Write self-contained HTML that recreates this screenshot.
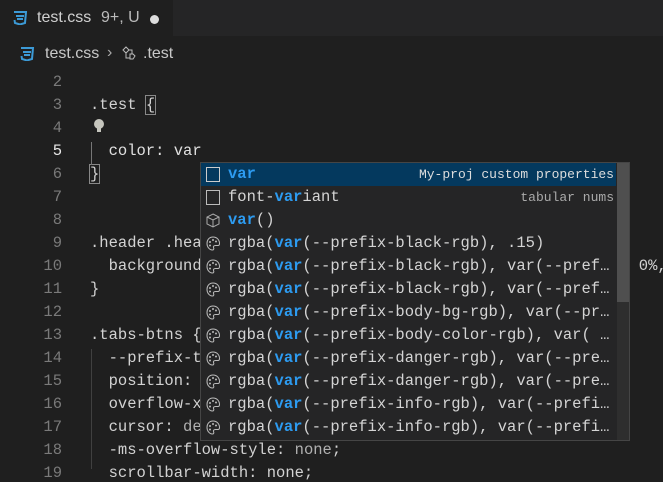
<!DOCTYPE html>
<html><head><meta charset="utf-8"><style>
*{margin:0;padding:0;box-sizing:border-box}
body{width:663px;height:466px;background:#1f1f1f;overflow:hidden;position:relative;font-family:"Liberation Sans",sans-serif;color:#ccc}
.tabbar{position:absolute;left:0;top:0;width:663px;height:36px;background:#252526}
.tab{position:absolute;left:0;top:0;width:173px;height:36px;background:#1f1f1f;font-size:16px;color:#d0d0d0}
.bc{position:absolute;left:0;top:36px;height:34px;width:663px;font-size:16px;color:#c8c8c8}
.mono{font-family:"Liberation Mono",monospace;font-size:15.5px}
.ln{position:absolute;left:0;width:62px;text-align:right;color:#7a7a7a}
.code{position:absolute;left:90px;color:#d2d2d2;white-space:pre}
.sw{position:absolute;left:200px;top:162px;width:430px;height:279px;background:#252526;border:1px solid #454545}
.row{position:absolute;left:0;width:415px;height:23px;white-space:pre;color:#d4d4d4}
.row .t{position:absolute;left:27px;top:2px}
.row .ic{position:absolute;left:5px;top:4px;width:14px;height:15px}
.h{color:#2d9bf0;font-weight:bold}
.d{position:absolute;right:2px;top:4px;color:#aaa;font-family:"Liberation Mono",monospace;font-size:13px}
</style></head><body>
<div class="tabbar"></div>
<div class="tab">
 <svg style="position:absolute;left:12px;top:11px" width="16" height="14" viewBox="0 0 16 14"><path d="M2 1h12l-1 11-5 1.5L3 12 2.5 9" fill="none" stroke="#3c9ad6" stroke-width="2"/><path d="M4 5h8M5 8h6" stroke="#3c9ad6" stroke-width="2"/></svg>
 <span style="position:absolute;left:37px;top:9px">test.css</span>
 <span style="position:absolute;left:101px;top:9px;color:#bbb">9+, U</span>
 <span style="position:absolute;left:150px;top:15px;width:9px;height:9px;border-radius:50%;background:#ddd"></span>
</div>
<div class="bc">
 <svg style="position:absolute;left:19px;top:11px" width="16" height="14" viewBox="0 0 16 14"><path d="M2 1h12l-1 11-5 1.5L3 12 2.5 9" fill="none" stroke="#3c9ad6" stroke-width="2"/><path d="M4 5h8M5 8h6" stroke="#3c9ad6" stroke-width="2"/></svg>
 <span style="position:absolute;left:45px;top:9px">test.css</span>
 <span style="position:absolute;left:107px;top:8px;color:#aaa">›</span>
 <svg style="position:absolute;left:122px;top:10px" width="15" height="15" viewBox="0 0 15 15"><path d="M1 4l3-3 3 3-3 3zM8 8h3l2 2-2 3H8zM4 7v5h4M7 4h3v4" fill="none" stroke="#bbb" stroke-width="1"/></svg>
 <span style="position:absolute;left:143px;top:9px">.test</span>
</div>
<div class="mono">
<div class="ln" style="top:73px">2</div>
<div class="ln" style="top:96px">3</div><div class="code" style="top:96px">.test <span style="outline:1px solid #888">{</span></div>
<div class="ln" style="top:119px">4</div>
<svg style="position:absolute;left:93px;top:118px" width="12" height="16" viewBox="0 0 12 16"><circle cx="6" cy="6" r="5" fill="#c5c5bd"/><rect x="4" y="10" width="4" height="4" fill="#c5c5bd"/></svg>
<div class="ln" style="top:142px;color:#e8e8e8">5</div><div class="code" style="top:142px;color:#e0e0e0">  color: var</div>
<div class="ln" style="top:165px">6</div><div class="code" style="top:165px"><span style="outline:1px solid #888">}</span></div>
<div style="position:absolute;left:91px;top:142px;width:1px;height:23px;background:#777"></div>
<div class="ln" style="top:188px">7</div>
<div class="ln" style="top:211px">8</div>
<div class="ln" style="top:234px">9</div><div class="code" style="top:234px">.header .header-</div>
<div class="ln" style="top:257px">10</div><div class="code" style="top:257px">  background-image: linear-gradient(0%,                    0%,</div>
<div class="ln" style="top:280px">11</div><div class="code" style="top:280px">}</div>
<div class="ln" style="top:303px">12</div>
<div class="ln" style="top:326px">13</div><div class="code" style="top:326px">.tabs-btns {</div>
<div class="ln" style="top:349px">14</div><div class="code" style="top:349px">  --prefix-tabs</div>
<div class="ln" style="top:372px">15</div><div class="code" style="top:372px">  position: rel</div>
<div class="ln" style="top:395px">16</div><div class="code" style="top:395px">  overflow-x: a</div>
<div class="ln" style="top:418px">17</div><div class="code" style="top:418px">  cursor: <span style="color:#b0b0b0">default</span></div>
<div class="ln" style="top:441px">18</div><div class="code" style="top:441px">  -ms-overflow-style: <span style="color:#b0b0b0">none</span>;</div>
<div class="ln" style="top:464px">19</div><div class="code" style="top:464px">  scrollbar-width: none;</div>
<div style="position:absolute;left:91px;top:349px;width:1px;height:120px;background:#404040"></div>

<div class="sw">
 <div class="row" style="top:0;background:#04395e;width:415px"><div class="ic" style="border:1px solid #ccc"></div><span class="t h">var</span><span class="d" style="color:#ddd">My-proj custom properties</span></div>
 <div class="row" style="top:23px"><div class="ic" style="border:1px solid #bbb"></div><span class="t">font-<span class="h">var</span>iant</span><span class="d">tabular nums</span></div>
 <div class="row" style="top:46px"><svg class="ic" viewBox="0 0 14 15"><path d="M7 1l6 3v7l-6 3-6-3V4zM1 4l6 3 6-3M7 7v7" fill="none" stroke="#aaa"/></svg><span class="t"><span class="h">var</span>()</span></div>
 <div class="row" style="top:69px"><svg class="ic" viewBox="0 0 14 15"><path d="M7 1C3 1 1 4 1 7.5S3.5 14 6.5 14c1.5 0 1.5-1.5 1-2.5s.5-2 2-2H12c1 0 1.5-1 1.5-2C13.5 4 11 1 7 1z" fill="none" stroke="#bbb"/><circle cx="4" cy="6" r="1" fill="#bbb"/><circle cx="7" cy="4" r="1" fill="#bbb"/><circle cx="10" cy="5.5" r="1" fill="#bbb"/><circle cx="4" cy="9.5" r="1" fill="#bbb"/></svg><span class="t">rgba(<span class="h">var</span>(--prefix-black-rgb), .15)</span></div>
 <div class="row" style="top:92px"><svg class="ic" viewBox="0 0 14 15"><path d="M7 1C3 1 1 4 1 7.5S3.5 14 6.5 14c1.5 0 1.5-1.5 1-2.5s.5-2 2-2H12c1 0 1.5-1 1.5-2C13.5 4 11 1 7 1z" fill="none" stroke="#bbb"/><circle cx="4" cy="6" r="1" fill="#bbb"/><circle cx="7" cy="4" r="1" fill="#bbb"/><circle cx="10" cy="5.5" r="1" fill="#bbb"/><circle cx="4" cy="9.5" r="1" fill="#bbb"/></svg><span class="t">rgba(<span class="h">var</span>(--prefix-black-rgb), var(--pref…</span></div>
 <div class="row" style="top:115px"><svg class="ic" viewBox="0 0 14 15"><path d="M7 1C3 1 1 4 1 7.5S3.5 14 6.5 14c1.5 0 1.5-1.5 1-2.5s.5-2 2-2H12c1 0 1.5-1 1.5-2C13.5 4 11 1 7 1z" fill="none" stroke="#bbb"/><circle cx="4" cy="6" r="1" fill="#bbb"/><circle cx="7" cy="4" r="1" fill="#bbb"/><circle cx="10" cy="5.5" r="1" fill="#bbb"/><circle cx="4" cy="9.5" r="1" fill="#bbb"/></svg><span class="t">rgba(<span class="h">var</span>(--prefix-black-rgb), var(--pref…</span></div>
 <div class="row" style="top:138px"><svg class="ic" viewBox="0 0 14 15"><path d="M7 1C3 1 1 4 1 7.5S3.5 14 6.5 14c1.5 0 1.5-1.5 1-2.5s.5-2 2-2H12c1 0 1.5-1 1.5-2C13.5 4 11 1 7 1z" fill="none" stroke="#bbb"/><circle cx="4" cy="6" r="1" fill="#bbb"/><circle cx="7" cy="4" r="1" fill="#bbb"/><circle cx="10" cy="5.5" r="1" fill="#bbb"/><circle cx="4" cy="9.5" r="1" fill="#bbb"/></svg><span class="t">rgba(<span class="h">var</span>(--prefix-body-bg-rgb), var(--pr…</span></div>
 <div class="row" style="top:161px"><svg class="ic" viewBox="0 0 14 15"><path d="M7 1C3 1 1 4 1 7.5S3.5 14 6.5 14c1.5 0 1.5-1.5 1-2.5s.5-2 2-2H12c1 0 1.5-1 1.5-2C13.5 4 11 1 7 1z" fill="none" stroke="#bbb"/><circle cx="4" cy="6" r="1" fill="#bbb"/><circle cx="7" cy="4" r="1" fill="#bbb"/><circle cx="10" cy="5.5" r="1" fill="#bbb"/><circle cx="4" cy="9.5" r="1" fill="#bbb"/></svg><span class="t">rgba(<span class="h">var</span>(--prefix-body-color-rgb), var( …</span></div>
 <div class="row" style="top:184px"><svg class="ic" viewBox="0 0 14 15"><path d="M7 1C3 1 1 4 1 7.5S3.5 14 6.5 14c1.5 0 1.5-1.5 1-2.5s.5-2 2-2H12c1 0 1.5-1 1.5-2C13.5 4 11 1 7 1z" fill="none" stroke="#bbb"/><circle cx="4" cy="6" r="1" fill="#bbb"/><circle cx="7" cy="4" r="1" fill="#bbb"/><circle cx="10" cy="5.5" r="1" fill="#bbb"/><circle cx="4" cy="9.5" r="1" fill="#bbb"/></svg><span class="t">rgba(<span class="h">var</span>(--prefix-danger-rgb), var(--pre…</span></div>
 <div class="row" style="top:207px"><svg class="ic" viewBox="0 0 14 15"><path d="M7 1C3 1 1 4 1 7.5S3.5 14 6.5 14c1.5 0 1.5-1.5 1-2.5s.5-2 2-2H12c1 0 1.5-1 1.5-2C13.5 4 11 1 7 1z" fill="none" stroke="#bbb"/><circle cx="4" cy="6" r="1" fill="#bbb"/><circle cx="7" cy="4" r="1" fill="#bbb"/><circle cx="10" cy="5.5" r="1" fill="#bbb"/><circle cx="4" cy="9.5" r="1" fill="#bbb"/></svg><span class="t">rgba(<span class="h">var</span>(--prefix-danger-rgb), var(--pre…</span></div>
 <div class="row" style="top:230px"><svg class="ic" viewBox="0 0 14 15"><path d="M7 1C3 1 1 4 1 7.5S3.5 14 6.5 14c1.5 0 1.5-1.5 1-2.5s.5-2 2-2H12c1 0 1.5-1 1.5-2C13.5 4 11 1 7 1z" fill="none" stroke="#bbb"/><circle cx="4" cy="6" r="1" fill="#bbb"/><circle cx="7" cy="4" r="1" fill="#bbb"/><circle cx="10" cy="5.5" r="1" fill="#bbb"/><circle cx="4" cy="9.5" r="1" fill="#bbb"/></svg><span class="t">rgba(<span class="h">var</span>(--prefix-info-rgb), var(--prefi…</span></div>
 <div class="row" style="top:253px"><svg class="ic" viewBox="0 0 14 15"><path d="M7 1C3 1 1 4 1 7.5S3.5 14 6.5 14c1.5 0 1.5-1.5 1-2.5s.5-2 2-2H12c1 0 1.5-1 1.5-2C13.5 4 11 1 7 1z" fill="none" stroke="#bbb"/><circle cx="4" cy="6" r="1" fill="#bbb"/><circle cx="7" cy="4" r="1" fill="#bbb"/><circle cx="10" cy="5.5" r="1" fill="#bbb"/><circle cx="4" cy="9.5" r="1" fill="#bbb"/></svg><span class="t">rgba(<span class="h">var</span>(--prefix-info-rgb), var(--prefi…</span></div>
 <div style="position:absolute;left:416px;top:0;width:12px;height:277px;background:#2e2e2e"></div>
 <div style="position:absolute;left:416px;top:0;width:12px;height:139px;background:#4f4f4f"></div>
</div>
</div>
</body></html>
